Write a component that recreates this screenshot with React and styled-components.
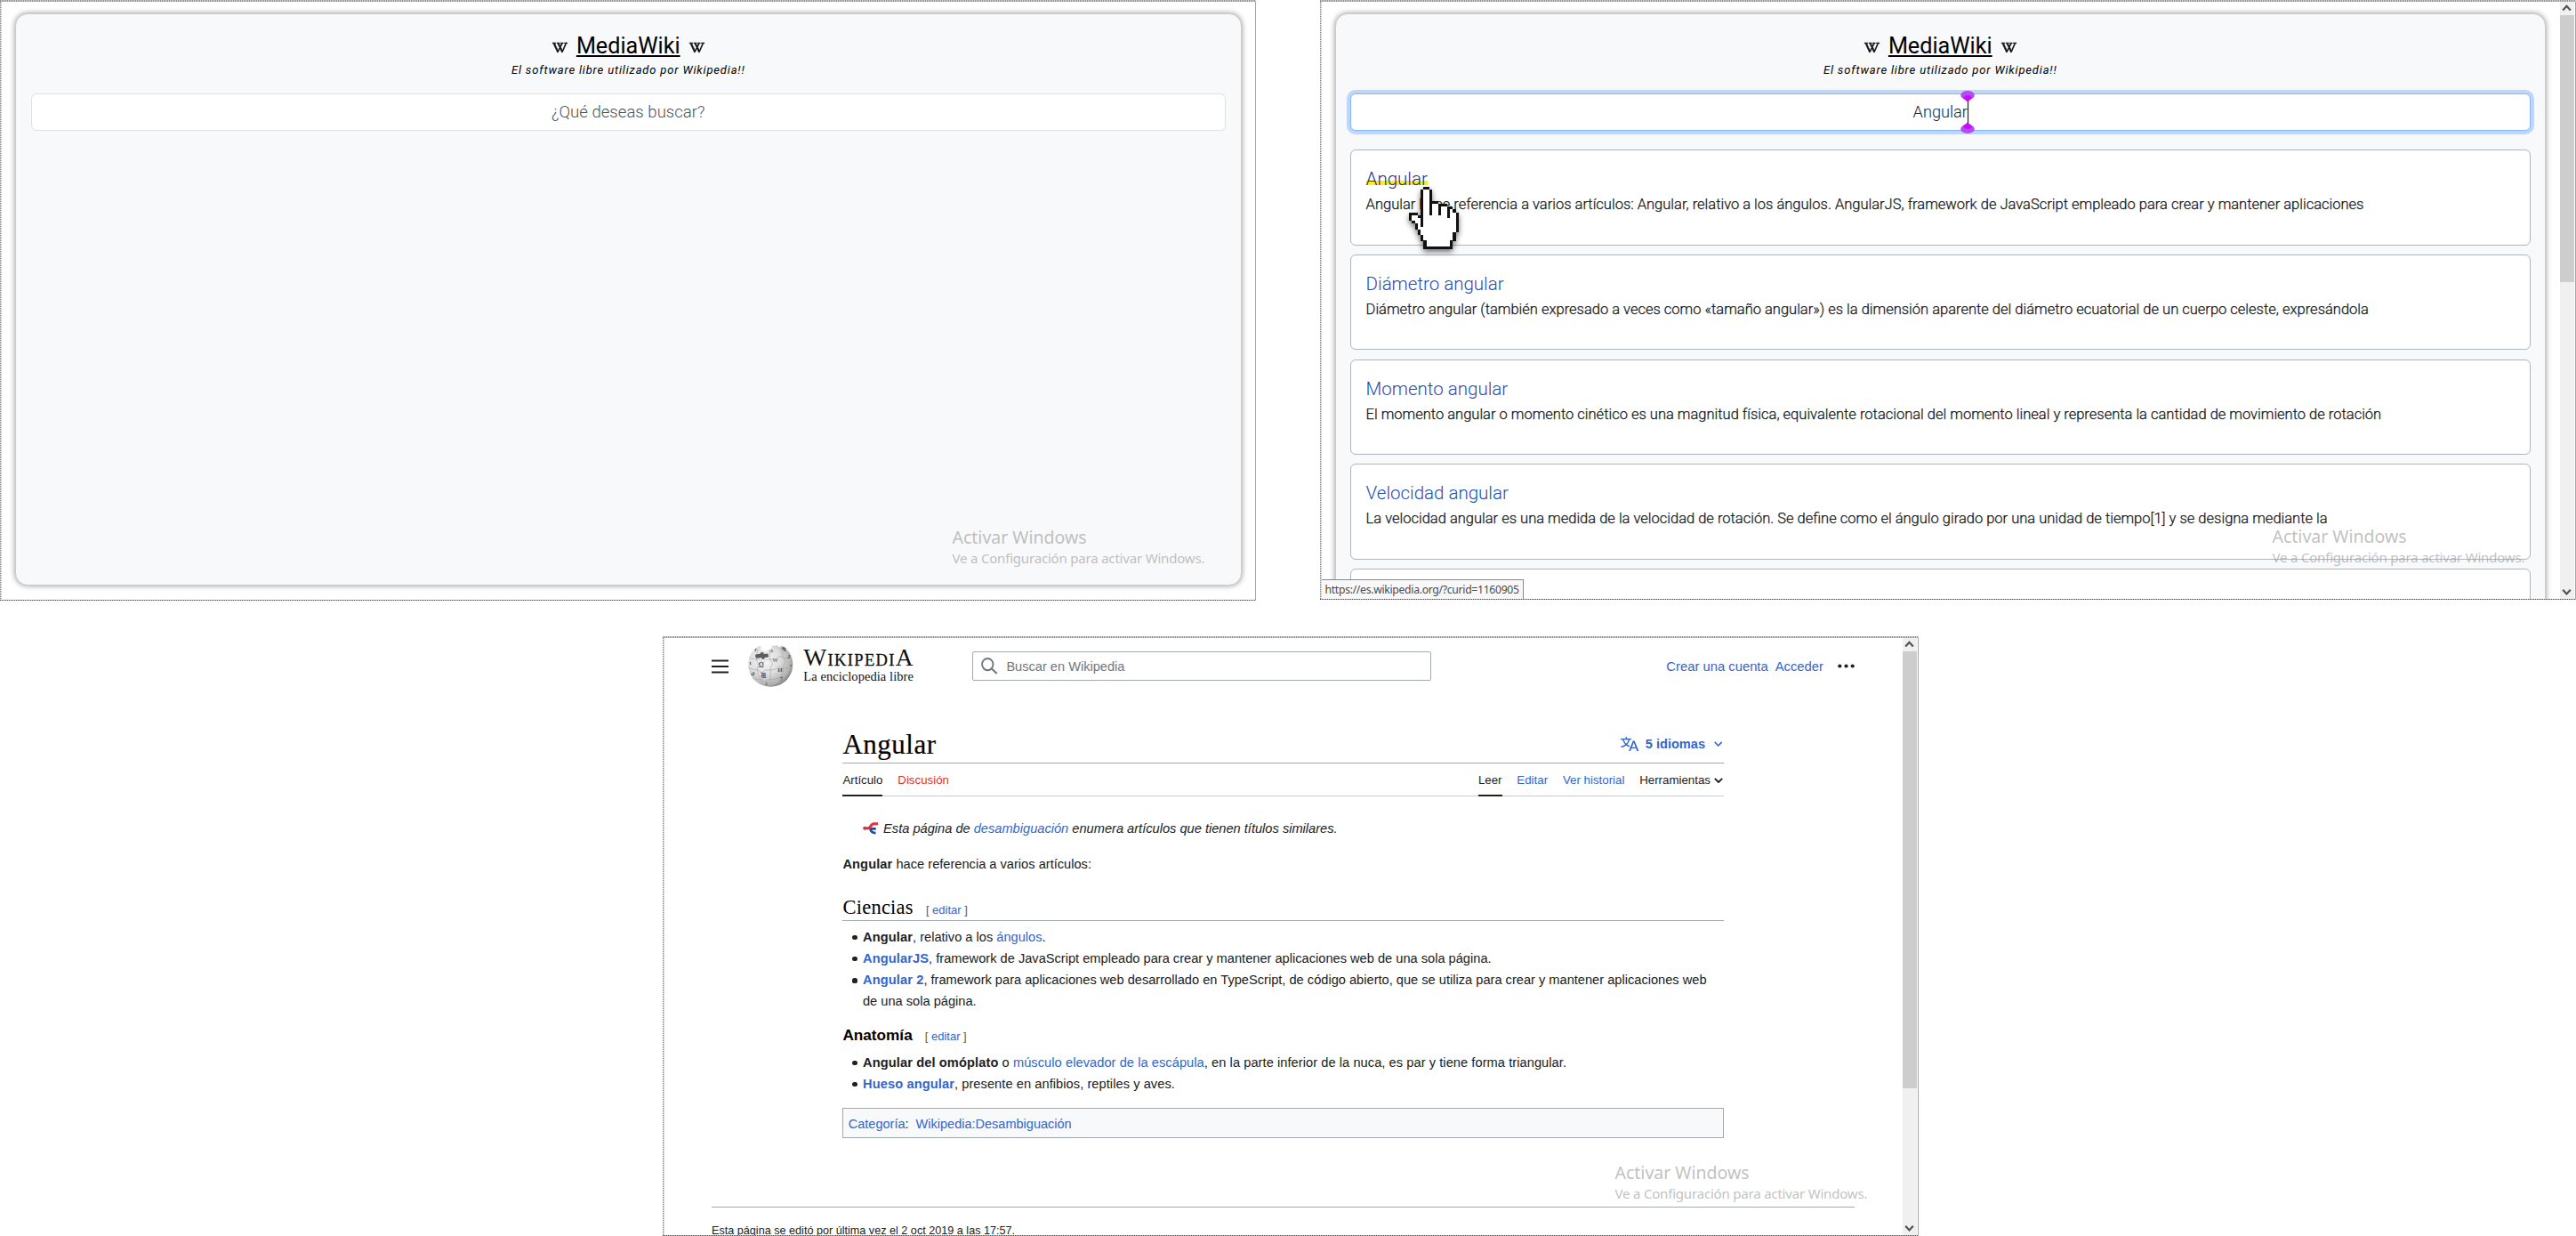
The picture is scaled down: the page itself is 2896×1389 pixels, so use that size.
import React from "react";
import styled, { createGlobalStyle, css } from "styled-components";
import { BsWikipedia } from "react-icons/bs";

const sans = `"Liberation Sans", Arial, sans-serif`;
const serif = `"Liberation Serif", "Times New Roman", serif`;
const roboto = `Roboto, sans-serif`;
const ui = `"Noto Sans", "Open Sans", sans-serif`;

const Global = createGlobalStyle`
  * { box-sizing: border-box; }
  body { margin: 0; background: #fff; font-family: ${sans}; }
  h1, h2, h3, p, ul { margin: 0; padding: 0; font-weight: 400; }
  ul { list-style: none; }
  svg { display: block; flex: none; }
  a { text-decoration: none; color: #3366cc; }
`;

const Page = styled.main`
  width: 2896px;
  height: 1389px;
  overflow: hidden;
  display: flex;
  flex-direction: column;
  justify-content: space-between;
  background: #fff;
  white-space: nowrap;
`;
const TopRow = styled.div`
  display: flex;
  justify-content: space-between;
`;
const BottomRow = styled.div`
  display: flex;
  padding-left: 745px;
`;
const Frame = styled.section`
  position: relative;
  display: flex;
  width: 1412px;
  height: ${(p) => p.$h}px;
  padding: 2px 2px 1px 2px;
  overflow: hidden;
  background:
    repeating-linear-gradient(90deg, #8e8e8e 0 1px, #d4d4d4 1px 2px) top left / 100% 2px no-repeat,
    repeating-linear-gradient(90deg, #4c4c4c 0 1px, #c4c4c4 1px 2px) bottom left / 100% 1px no-repeat,
    repeating-linear-gradient(180deg, #8a8a8a 0 1px, #e2e2e2 1px 2px) top left / 1.5px 100% no-repeat,
    linear-gradient(#a6a6a6, #a6a6a6) top right / 1.5px 100% no-repeat,
    #fff;
`;

/* ---------- MediaWiki search app ---------- */
const SearchApp = styled.div`
  flex: 1;
  min-width: 0;
  height: 100%;
  overflow: hidden;
  padding: 13px ${(p) => p.$right}px 16px 15px;
`;
const Panel = styled.div`
  height: ${(p) => p.$h}px;
  padding: 23.2px ${(p) => p.$pad}px 0;
  display: flex;
  flex-direction: column;
  background: #f8f9fa;
  border: 1px solid #c9cccc;
  border-radius: 14px;
  box-shadow: 0 0 6px rgba(0, 0, 0, 0.42);
`;
const Brand = styled.div`
  display: flex;
  align-items: center;
  justify-content: center;
  gap: 10px;
  height: 26px;
  color: #111;
  svg {
    width: 17px;
    height: 17px;
    margin-top: 2px;
    overflow: visible;
    stroke: currentColor;
    stroke-width: 0.8px;
  }
`;
const BrandName = styled.h1`
  font: 400 25.2px/26px ${roboto};
  color: #000;
  text-decoration: underline;
  text-decoration-thickness: 1.5px;
  text-underline-offset: 2px;
`;
const Tagline = styled.p`
  margin-top: 5px;
  font: italic 400 13px/18px ${roboto};
  letter-spacing: 0.83px;
  text-align: center;
  color: #000;
`;
const SearchField = styled.div`
  flex: none;
  display: flex;
  justify-content: center;
  align-items: center;
  height: 42px;
  margin-top: 16.6px;
  border: 1px solid ${(p) => (p.$focus ? "#86b7fe" : "#dee2e6")};
  border-radius: 6px;
  background: #fff;
  font: 300 ${(p) => (p.$focus ? 18.2 : 18.6)}px/24px ${roboto};
  color: ${(p) => (p.$focus ? "#212529" : "#4d5358")};
  ${(p) => p.$focus && css`box-shadow: 0 0 0 4px rgba(13, 110, 253, 0.25);`}
`;
const Typed = styled.span`
  position: relative;
`;
const Caret = styled.svg`
  position: absolute;
  left: calc(100% - 7.5px);
  top: -12px;
`;
const Results = styled.ul`
  display: flex;
  flex-direction: column;
  gap: 10.3px;
  margin-top: 21.7px;
`;
const ResultCard = styled.li`
  flex: none;
  height: 107.3px;
  padding: 19px 16.6px;
  border: 1.4px solid #adb5bd;
  border-radius: 6px;
  background: #fff;
`;
const ResultTitle = styled.h2`
  font: 300 20.5px/27px ${roboto};
  a {
    color: ${(p) => (p.$hover ? "#23318f" : "#1550b4")};
    ${(p) => p.$hover && css`background: linear-gradient(transparent 58%, #fff200 58%, #fff200 80%, transparent 80%);`}
  }
`;
const ResultText = styled.p`
  margin-top: 2px;
  font: 300 16.5px/25px ${roboto};
  color: #14171a;
  -webkit-text-stroke: 0.25px;
`;
const Hand = styled.svg`
  position: absolute;
  left: 100px;
  top: 210px;
  filter: drop-shadow(0 3px 3px rgba(0, 0, 0, 0.55));
`;

const Watermark = styled.div`
  position: absolute;
  left: 1070.5px;
  top: ${(p) => p.$y}px;
  font-family: ${ui};
  color: rgba(150, 150, 150, 0.6);
`;
const MarkTitle = styled.p`
  font-size: 19.5px;
  line-height: 26px;
`;
const MarkText = styled.p`
  font-size: 15px;
  line-height: 20px;
  letter-spacing: -0.19px;
`;
const StatusBar = styled.div`
  position: absolute;
  left: 1.5px;
  bottom: 1px;
  height: 22px;
  padding: 0 4px;
  border: 1px solid #888;
  border-left: 0;
  border-bottom: 0;
  background: #f8f8fa;
  font: 400 12.2px/22px ${ui};
  letter-spacing: -0.3px;
  color: #4a4a4a;
`;
const Bar = styled.div`
  flex: none;
  display: flex;
  flex-direction: column;
  align-items: center;
  width: 16.5px;
  background: #f0f0f0;
`;
const BarThumb = styled.div`
  width: 100%;
  height: ${(p) => p.$h}px;
  background: #cdcdcd;
`;
const BarButton = styled.div`
  display: flex;
  align-items: center;
  height: 14.5px;
  ${(p) => p.$end && css`margin-top: auto;`}
`;

function Scrollbar({ thumb }) {
  return (
    <Bar>
      <BarButton>
        <svg width="11" height="9" viewBox="0 0 11 9"><path d="M1.2 6.4 5.5 1.8 9.8 6.4" fill="none" stroke="#505050" strokeWidth="2.2" /></svg>
      </BarButton>
      <BarThumb $h={thumb} />
      <BarButton $end>
        <svg width="11" height="9" viewBox="0 0 11 9"><path d="M1.2 1.8 5.5 6.4 9.8 1.8" fill="none" stroke="#505050" strokeWidth="2.2" /></svg>
      </BarButton>
    </Bar>
  );
}

function Activation({ y }) {
  return (
    <Watermark $y={y}>
      <MarkTitle>Activar Windows</MarkTitle>
      <MarkText>Ve a Configuración para activar Windows.</MarkText>
    </Watermark>
  );
}

function Header() {
  return (
    <>
      <Brand>
        <BsWikipedia />
        <BrandName>MediaWiki</BrandName>
        <BsWikipedia />
      </Brand>
      <Tagline>El software libre utilizado por Wikipedia!!</Tagline>
    </>
  );
}

// "#" is outline, "o" is fill, "." is transparent
const handRows = [
  ".....##..........",
  "....#oo#.........",
  "....#oo#.........",
  "....#oo#.........",
  "....#oo#.........",
  "....#oo###.......",
  "....#oo#oo###....",
  "....#oo#oo#oo##..",
  "....#oo#oo#oo#o#.",
  "###.#oo#oo#oo#oo#",
  "#oo##oooooooo#oo#",
  "#ooo#ooooooooooo#",
  ".#oo#ooooooooooo#",
  "..#o#ooooooooooo#",
  "..#ooooooooooooo#",
  "...#oooooooooooo#",
  "...#ooooooooooo#.",
  "....#oooooooooo#.",
  "....#oooooooooo#.",
  ".....#oooooooo#..",
  ".....#oooooooo#..",
  ".....##########..",
];

function HandPointer() {
  return (
    <Hand width="56" height="70" viewBox="0 0 17 22" preserveAspectRatio="none" shapeRendering="crispEdges">
      {handRows.flatMap((row, y) =>
        [...row].map((c, x) =>
          c === "." ? null : (
            <rect key={`${x}-${y}`} x={x} y={y} width="1.02" height="1.02" fill={c === "#" ? "#111" : "#fff"} />
          )
        )
      )}
    </Hand>
  );
}

const results = [
  ["Angular", "Angular hace referencia a varios artículos: Angular, relativo a los ángulos. AngularJS, framework de JavaScript empleado para crear y mantener aplicaciones"],
  ["Diámetro angular", "Diámetro angular (también expresado a veces como «tamaño angular») es la dimensión aparente del diámetro ecuatorial de un cuerpo celeste, expresándola"],
  ["Momento angular", "El momento angular o momento cinético es una magnitud física, equivalente rotacional del momento lineal y representa la cantidad de movimiento de rotación"],
  ["Velocidad angular", "La velocidad angular es una medida de la velocidad de rotación. Se define como el ángulo girado por una unidad de tiempo[1] y se designa mediante la"],
];

/* ---------- Wikipedia article ---------- */
const Wiki = styled.div`
  flex: 1;
  min-width: 0;
  height: 100%;
  overflow: hidden;
`;
const SiteHeader = styled.header`
  display: flex;
  align-items: center;
  height: 63px;
  padding: 0 54px 0 53.4px;
  font-size: 14.8px;
  line-height: 20px;
`;
const Logo = styled.div`
  display: flex;
  align-items: center;
  gap: 11.4px;
  width: 252px;
  margin-left: 22px;
  font-family: ${serif};
  color: #111;
`;
const Wordmark = styled.p`
  font-size: 27.5px;
  line-height: 20px;
  letter-spacing: 1.35px;
  margin-bottom: 2.7px;
  span {
    font-size: 18.5px;
    line-height: 0;
    -webkit-text-stroke: 0.3px;
  }
`;
const Slogan = styled.p`
  font-size: 14.5px;
  line-height: 16px;
  letter-spacing: 0.06px;
`;
const WikiSearch = styled.div`
  display: flex;
  align-items: center;
  gap: 9.5px;
  width: 515.5px;
  height: 33px;
  padding-left: 9px;
  border: 1.2px solid #a2a9b1;
  border-radius: 2px;
  font-size: 14.6px;
  color: #72777d;
`;
const UserLinks = styled.nav`
  display: flex;
  align-items: center;
  gap: 8px;
  margin-left: auto;
  svg { margin-left: 7.5px; }
`;
const Article = styled.article`
  width: 990.6px;
  margin: 37.8px 0 0 200.4px;
  color: #202122;
  font-size: 14.64px;
  line-height: 24.1px;
  b { font-weight: 700; letter-spacing: 0.11px; }
`;
const TitleBar = styled.div`
  display: flex;
  justify-content: space-between;
  height: 40.2px;
  border-bottom: 1.3px solid #a2a9b1;
`;
const Title = styled.h1`
  font: 400 31px/37.6px ${serif};
  letter-spacing: 0.5px;
  color: #000;
  -webkit-text-stroke: 0.2px;
`;
const Languages = styled.div`
  display: flex;
  align-items: center;
  height: 20px;
  margin-top: 8.3px;
  padding-right: 2px;
  gap: 7px;
  font: 700 14.6px/20px ${sans};
  color: #3366cc;
  svg:last-child { margin-left: 2.5px; }
`;
const Tabs = styled.nav`
  display: flex;
  gap: 16.8px;
  height: 37px;
  border-bottom: 1px solid #c8ccd1;
  font-size: 13.3px;
  line-height: 20px;
`;
const Tab = styled.a`
  display: flex;
  height: 37px;
  padding-top: 9.2px;
  color: ${(p) => p.$c || "#3366cc"};
  ${(p) => p.$active && css`border-bottom: 2px solid #202122;`}
  ${(p) => p.$first && css`margin-left: auto;`}
  svg { margin: 7px 0.5px 0 4.5px; }
`;
const Hatnote = styled.p`
  display: flex;
  align-items: center;
  gap: 5.3px;
  margin-top: 24px;
  padding-left: 22.9px;
  font-style: italic;
`;
const Intro = styled.p`
  margin-top: 16.3px;
`;
const Section = styled.div`
  display: flex;
  align-items: baseline;
  gap: 14px;
  margin-top: ${(p) => p.$mt}px;
  ${(p) => p.$rule && css`height: 31px; border-bottom: 1.2px solid #a2a9b1;`}
`;
const H2 = styled.h2`
  font: 400 22.5px/31.4px ${serif};
  letter-spacing: 0.25px;
  color: #000;
`;
const H3 = styled.h3`
  font: 700 17.2px/26px ${sans};
  color: #000;
`;
const Edit = styled.span`
  font-size: 13px;
  line-height: 20px;
  color: #54595d;
`;
const List = styled.ul`
  margin-top: 5.7px;
  letter-spacing: ${(p) => p.$track || 0}px;
`;
const Item = styled.li`
  display: flex;
  &::before {
    content: "";
    flex: none;
    width: 5.2px;
    height: 5.2px;
    margin: 10.2px 6.4px 0 11px;
    border-radius: 50%;
    background: #202122;
  }
`;
const Category = styled.div`
  display: flex;
  align-items: center;
  gap: 8px;
  height: 34.8px;
  margin-top: 14.6px;
  padding: 1px 0 0 5.4px;
  border: 1.2px solid #a2a9b1;
  background: #f8f9fa;
  font-size: 14.52px;
`;
const Footer = styled.footer`
  margin: 76.3px 54px 0 53px;
  padding-top: 16.5px;
  border-top: 1.2px solid #a2a9b1;
  font-size: 12.63px;
  line-height: 20px;
  color: #202122;
`;

function Globe() {
  return (
    <svg width="50.5" height="47" viewBox="0 0 50.5 47">
      <defs>
        <radialGradient id="globe" cx="0.36" cy="0.36" r="0.7">
          <stop offset="0" stopColor="#f6f6f6" />
          <stop offset="0.5" stopColor="#dedede" />
          <stop offset="0.85" stopColor="#b2b2b2" />
          <stop offset="1" stopColor="#7c7c7c" />
        </radialGradient>
      </defs>
      <path d="M7 4.5 12 1l3 .2L14 5l6 2 4-2.400 3-.4L26 1l7-.8 2 2.300 3-1.900 5 3.600C47.700 8.600 50.300 14.500 50.300 21.500 50.300 36 39 46.800 25.300 46.800 11.500 46.800.3 36 .3 21.500.3 14.600 2.800 8.600 7 4.500Z" fill="url(#globe)" />
      <g fill="none" stroke="#a3a3a3" strokeWidth="0.6">
        <path d="M1.500 14c4 1.800 7 2 10.500 2s2 3.500 4.500 3.500 1.500-3.300 5-3.500 7 .6 10-.8 3-3.200 5.500-2.500 2 3 5 2 4-2 6-2.700" />
        <path d="M.6 25.500c4 1.500 6 2.200 9.500 2.200s2.500 3 5 3 2-3 5.500-2.800 7 .2 10-.7 2.500-3.500 5-3 2.500 2.800 5.500 2 6-1.600 8.500-2.700" />
        <path d="M4.500 37c3.500 1 6.500 1.700 9.500 1.600s2.500 2.600 5 2.600 2-2.500 5-2.600 6-.4 9-1.300 2.500-2 4.500-1.800 3.500-.4 6.500-1.300" />
        <path d="M11.500 5c-1.800 4-2.300 7-2 11s2.500 3 2.300 5.500-2.300 3-1.600 6.500 1.700 6.500 3.300 9.500 3 5 5 7.500" />
        <path d="M24.500 5c-.3 4.500 0 7.500.3 10.800s2.600 2.500 2.500 5-2.400 2.800-2.200 6.800.2 7.500-.1 10.500.1 5 .3 8" />
        <path d="M36 2.800c2 3.500 2.700 6.500 3.300 10s2.700 2 2.700 4.500-2.200 3-2.200 6.500-.6 7.500-2.100 11-2.700 6-5.200 9.500" />
      </g>
      <path d="m8.500 10.500 5-.8 1-1.700 3.500.6-.6 1.500 5-.6.7 4-4.500.6-.3 1.800-3.300-.3.300-1.500-5.300.6c-1.500-.5-2.500-2-1.500-4.200Z" fill="#5c5c5c" />
      <path d="m37.500 3.500 2.500-2 3 2.400-1.300 1.500 1.600 1.300-2.500.3Z" fill="#6d6d6d" />
      <g fill="#555" fontFamily={serif} fontWeight="700" fontSize="7.500">
        <text x="11.800" y="25.300">Ω</text>
        <text x="27.300" y="18.600" fontSize="6.500" fill="#777">W</text>
        <text x="33.300" y="29.800" fontSize="7">И</text>
        <text x="35.700" y="40" fontSize="7">7</text>
        <text x="1.400" y="22" fontSize="7">ι</text>
        <text x="44" y="15" fontSize="7">J</text>
        <text x="2.500" y="33" fontSize="6">ي</text>
        <text x="47" y="25" fontSize="6">•</text>
        <text x="7.500" y="6.500" fontSize="5.500">r</text>
        <text x="25" y="7.500" fontSize="5.500" fill="#777">ა</text>
        <text x="18.500" y="44.500" fontSize="6" fill="#777">ა</text>
        <text x="14.300" y="36" fontFamily="'Noto Sans CJK TC', sans-serif" fontSize="6">祖</text>
      </g>
    </svg>
  );
}

const Chevron = ({ w = 9.4, thick = 1.6, color }) => (
  <svg width={w} height="6" viewBox="0 0 10 6" preserveAspectRatio="none">
    <path d="M.8.9 5 5 9.200.9" fill="none" stroke={color} strokeWidth={thick} />
  </svg>
);

const EditLink = () => (
  <Edit>[ <a>editar</a> ]</Edit>
);

function WikiPage() {
  return (
    <Wiki>
      <SiteHeader>
        <svg width="19" height="16" viewBox="0 0 19 16"><path d="M0 1.500h19M0 8h19M0 14.500h19" stroke="#202122" strokeWidth="2" /></svg>
        <Logo>
          <Globe />
          <div>
            <Wordmark>W<span>IKIPEDI</span>A</Wordmark>
            <Slogan>La enciclopedia libre</Slogan>
          </div>
        </Logo>
        <WikiSearch>
          <svg width="18.500" height="18.500" viewBox="0 0 18.500 18.500" fill="none" stroke="#72777d" strokeWidth="1.900">
            <ellipse cx="7.300" cy="7.600" rx="6.200" ry="6.600" />
            <path d="m11.700 12.300 6 5.700" strokeWidth="2.100" />
          </svg>
          Buscar en Wikipedia
        </WikiSearch>
        <UserLinks>
          <a>Crear una cuenta</a>
          <a>Acceder</a>
          <svg width="19" height="5" viewBox="0 0 19 5" fill="#202122">
            <circle cx="2.300" cy="2.500" r="2.100" />
            <circle cx="9.500" cy="2.500" r="2.100" />
            <circle cx="16.700" cy="2.500" r="2.100" />
          </svg>
        </UserLinks>
      </SiteHeader>
      <Article>
        <TitleBar>
          <Title>Angular</Title>
          <Languages>
            <svg width="20.300" height="16" viewBox="0 2 20 16" preserveAspectRatio="none" fill="#3366cc">
              <path d="M20 18h-1.440a.6.6 0 0 1-.4-.12.8.8 0 0 1-.23-.31L17 15h-5l-1 2.540a.8.8 0 0 1-.22.3.6.6 0 0 1-.4.14H9l4.550-11.470h1.890zm-3.530-4.310L14.890 9.500a12 12 0 0 1-.39-1.240q-.09.37-.19.69l-.19.56-1.580 4.190zm-6.300-1.580a13.400 13.400 0 0 1-2.910-1.410 11.460 11.460 0 0 0 2.810-5.370H12V4H7.310a4 4 0 0 0-.2-.56C6.870 2.790 6.600 2 6.600 2l-1.470.5s.4.89.6 1.500H0v1.330h2.150A11.230 11.230 0 0 0 5 10.700a17.200 17.200 0 0 1-5 2.100q.56.82.87 1.380a23.300 23.300 0 0 0 5.220-2.510 15.600 15.600 0 0 0 3.560 1.770zM3.630 5.330h4.910a8.100 8.100 0 0 1-2.450 4.450 9.100 9.100 0 0 1-2.460-4.450" />
            </svg>
            5 idiomas
            <Chevron color="#3366cc" />
          </Languages>
        </TitleBar>
        <Tabs>
          <Tab $c="#202122" $active>Artículo</Tab>
          <Tab $c="#d73333">Discusión</Tab>
          <Tab $c="#202122" $active $first>Leer</Tab>
          <Tab>Editar</Tab>
          <Tab>Ver historial</Tab>
          <Tab $c="#202122">Herramientas<Chevron w={10} thick={1.9} color="#202122" /></Tab>
        </Tabs>
        <Hatnote>
          <svg width="17.500" height="14" viewBox="0 0 17.500 14" fill="none">
            <path d="M8 7.400h6.700M8.300 7.200c.4 3.600 2.200 4.900 6.200 4.900" stroke="#2a4b8d" strokeWidth="2.600" />
            <path d="M1.400 6.700H6c3.300 0 2.300-5 6.500-5h4.600" stroke="#dd333b" strokeWidth="3" />
            <circle cx="2.200" cy="6.700" r="2" fill="#dd333b" />
          </svg>
          <span>Esta página de <a>desambiguación</a> enumera artículos que tienen títulos similares.</span>
        </Hatnote>
        <Intro><b>Angular</b> hace referencia a varios artículos:</Intro>
        <Section $mt={20.8} $rule>
          <H2>Ciencias</H2>
          <EditLink />
        </Section>
        <List>
          <Item><span><b>Angular</b>, relativo a los <a>ángulos</a>.</span></Item>
          <Item><span><a><b>AngularJS</b></a>, framework de JavaScript empleado para crear y mantener aplicaciones web de una sola página.</span></Item>
          <Item><span><a><b>Angular 2</b></a>, framework para aplicaciones web desarrollado en TypeScript, de código abierto, que se utiliza para crear y mantener aplicaciones web<br />de una sola página.</span></Item>
        </List>
        <Section $mt={12.9}>
          <H3>Anatomía</H3>
          <EditLink />
        </Section>
        <List $track={0.06}>
          <Item><span><b>Angular del omóplato</b> o <a>músculo elevador de la escápula</a>, en la parte inferior de la nuca, es par y tiene forma triangular.</span></Item>
          <Item><span><a><b>Hueso angular</b></a>, presente en anfibios, reptiles y aves.</span></Item>
        </List>
        <Category>
          <span><a>Categoría</a>:</span>
          <a>Wikipedia:Desambiguación</a>
        </Category>
      </Article>
      <Footer>Esta página se editó por última vez el 2 oct 2019 a las 17:57.</Footer>
    </Wiki>
  );
}

export default function App() {
  return (
    <>
      <Global />
      <Page>
        <TopRow>
          <Frame $h={675}>
            <SearchApp $right={14.5}>
              <Panel $h={642.5} $pad={16.5}>
                <Header />
                <SearchField>¿Qué deseas buscar?</SearchField>
              </Panel>
            </SearchApp>
            <Activation y={591} />
          </Frame>
          <Frame $h={674}>
            <SearchApp $right={16}>
              <Panel $h={900} $pad={16}>
                <Header />
                <SearchField $focus>
                  <Typed>
                    Angular
                    <Caret width="16" height="48" viewBox="0 0 16 48">
                      <path d="M8.500 11v26" stroke="#222" strokeWidth="1.200" />
                      <g fill="#b64bf0">
                        <ellipse cx="8" cy="5" rx="7.800" ry="5" />
                        <ellipse cx="8" cy="43" rx="7.800" ry="5" />
                      </g>
                      <path d="M8 12.500 3 8.500Q4 5.500 8 5t5 3.500ZM8 35.500l-5 4Q4 42.500 8 43t5-3.500Z" fill="#c60dff" />
                    </Caret>
                  </Typed>
                </SearchField>
                <Results>
                  {results.map(([title, text], i) => (
                    <ResultCard key={title}>
                      <ResultTitle $hover={i === 0}><a>{title}</a></ResultTitle>
                      <ResultText>{text}</ResultText>
                    </ResultCard>
                  ))}
                  <ResultCard />
                </Results>
              </Panel>
            </SearchApp>
            <Scrollbar thumb={300.4} />
            <HandPointer />
            <Activation y={590} />
            <StatusBar>https://es.wikipedia.org/?curid=1160905</StatusBar>
          </Frame>
        </TopRow>
        <BottomRow>
          <Frame $h={674}>
            <WikiPage />
            <Scrollbar thumb={491} />
            <Activation y={590} />
          </Frame>
        </BottomRow>
      </Page>
    </>
  );
}
